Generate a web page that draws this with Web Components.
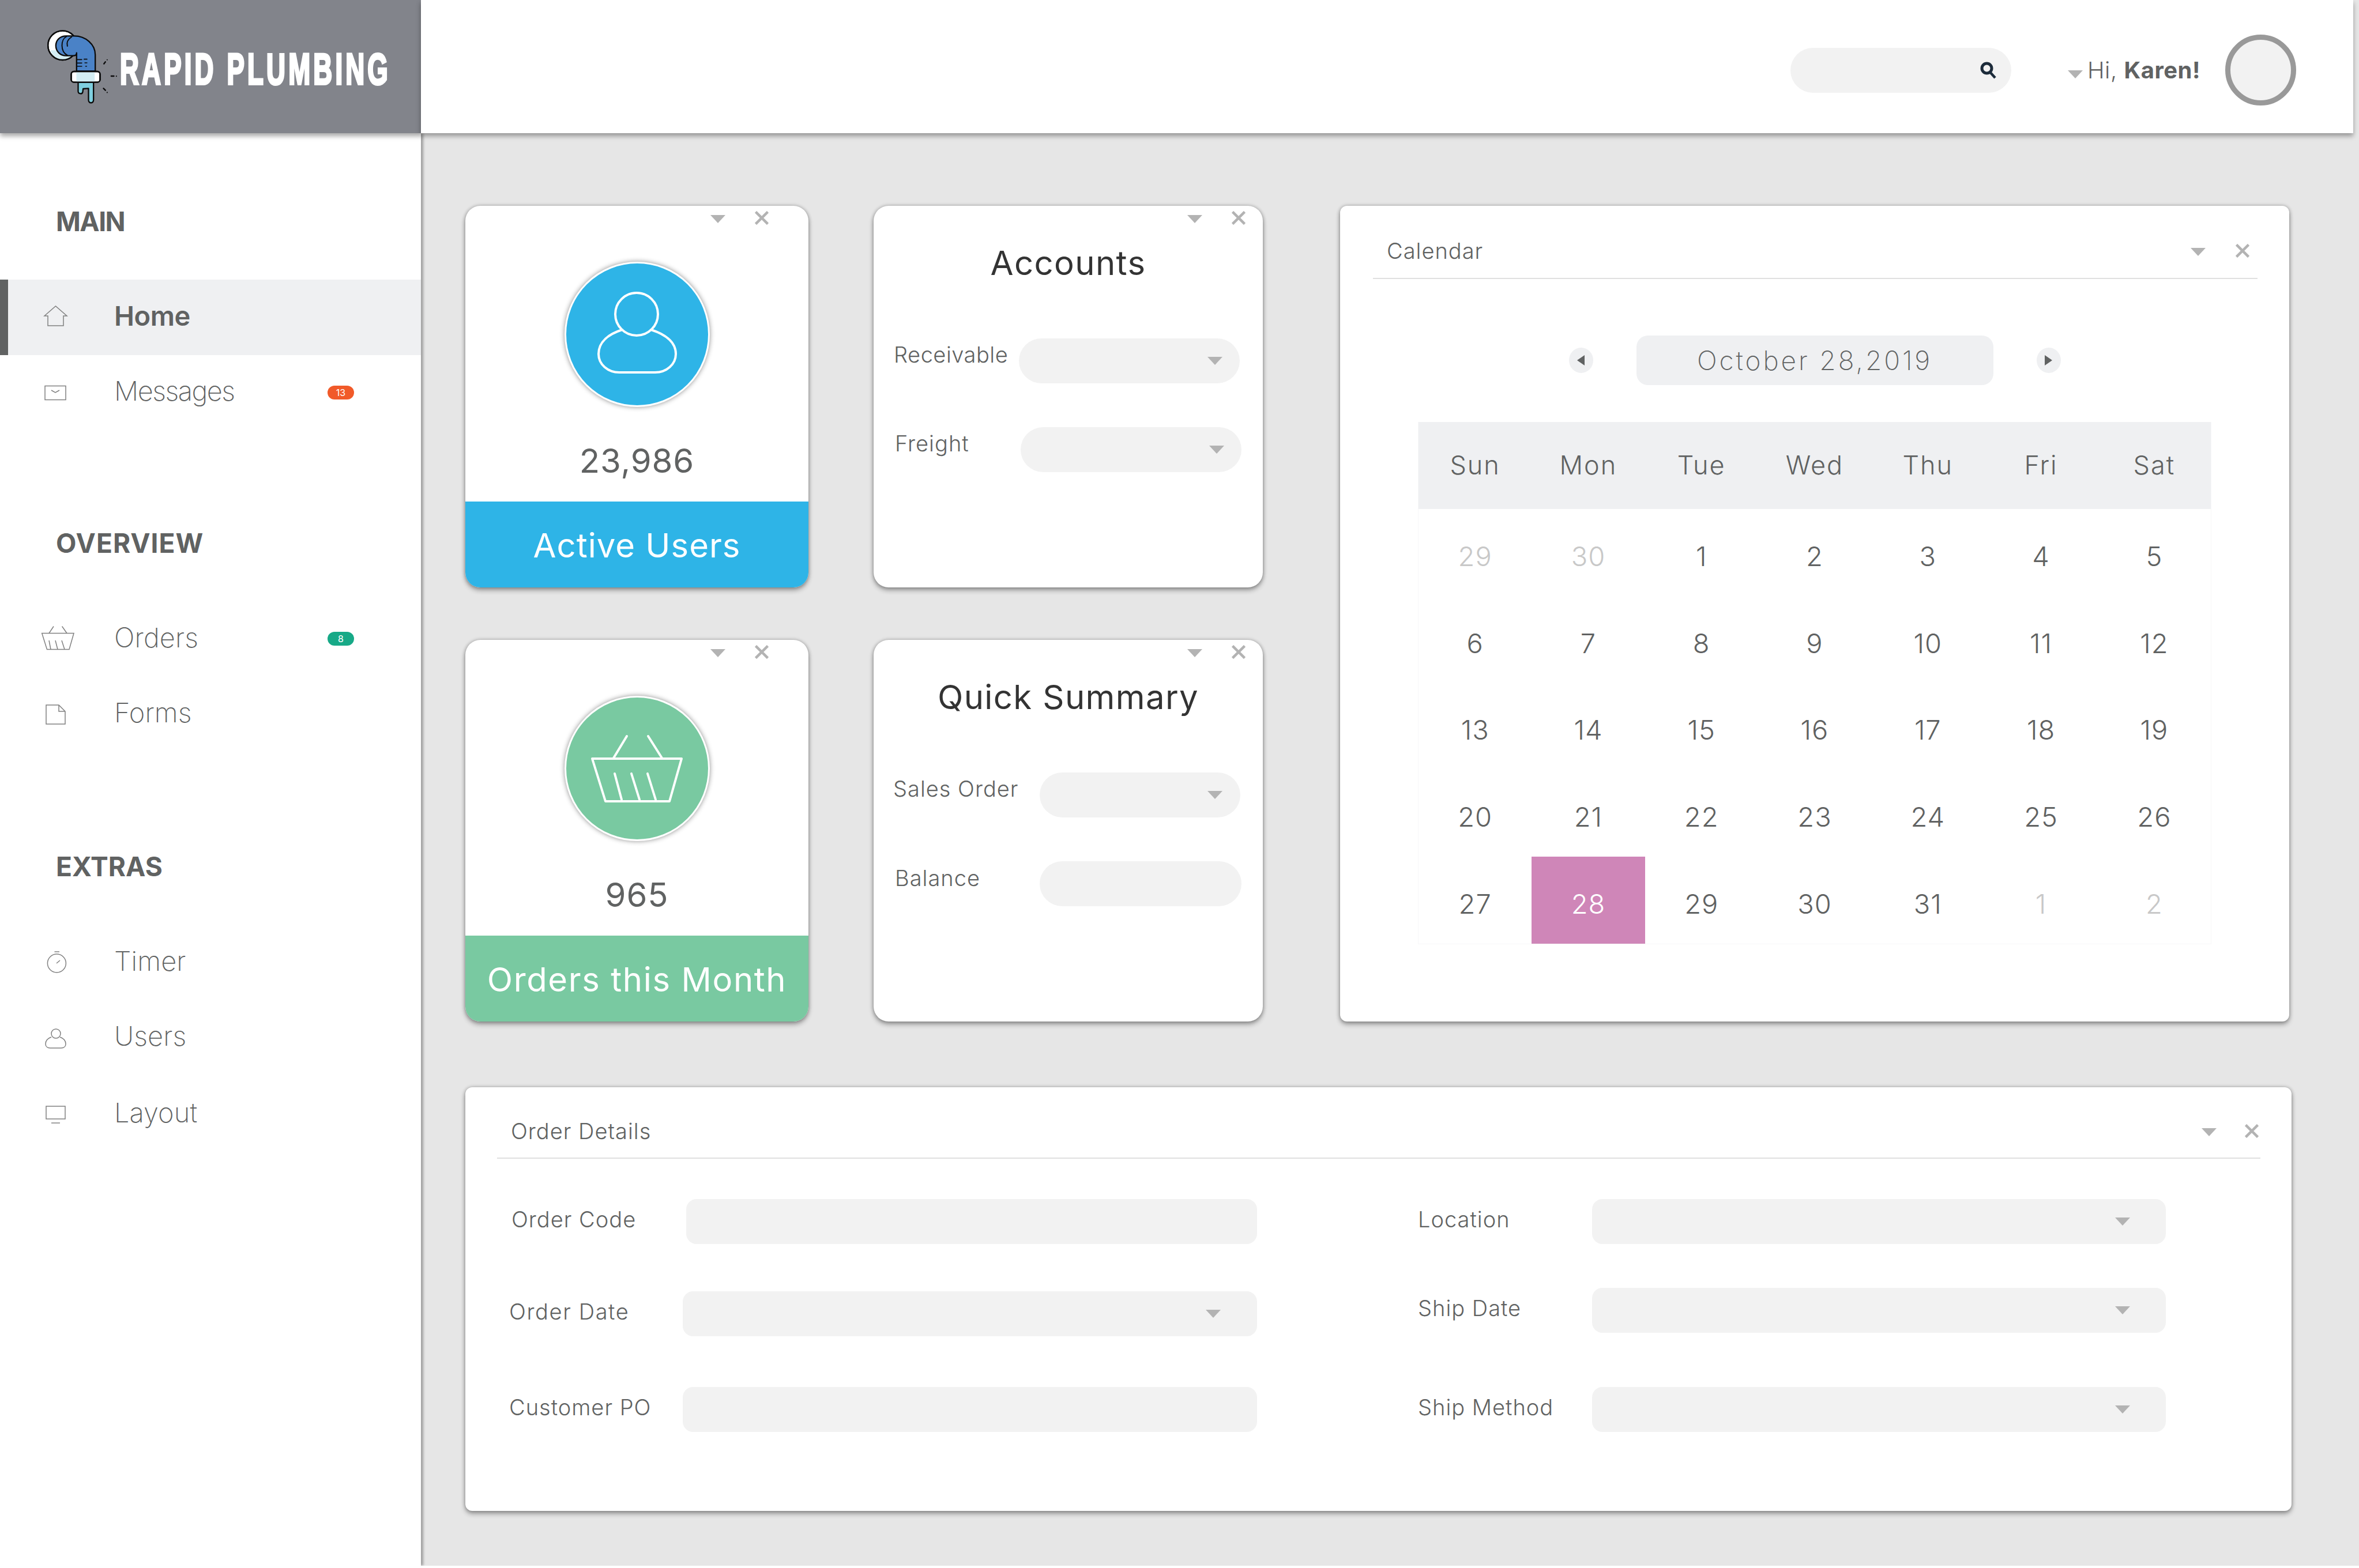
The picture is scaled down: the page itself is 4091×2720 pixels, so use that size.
<!DOCTYPE html>
<html lang="en">
<head>
<meta charset="utf-8">
<title>Rapid Plumbing</title>
<style>
  html, body { margin: 0; background: #fff; }
  body { font-family: "Inter", "Liberation Sans", sans-serif; color: #606262; }
</style>
</head>
<body>
<app-shell>
  <brand-logo slot="logo">RAPID PLUMBING</brand-logo>
  <top-bar slot="top" user="Karen!"></top-bar>

  <side-nav slot="side">
    <nav-section heading="MAIN" style="letter-spacing:-1.5px">
      <nav-item icon="home" active style="letter-spacing:-.5px">Home</nav-item>
      <nav-item icon="mail" badge="13" tone="#f15a29" style="letter-spacing:-1.5px">Messages</nav-item>
    </nav-section>
    <nav-section heading="OVERVIEW" style="letter-spacing:1px">
      <nav-item icon="basket" badge="8" tone="#17a987">Orders</nav-item>
      <nav-item icon="doc">Forms</nav-item>
    </nav-section>
    <nav-section heading="EXTRAS" style="margin-top:162px">
      <nav-item icon="timer">Timer</nav-item>
      <nav-item icon="user">Users</nav-item>
      <nav-item icon="screen" style="margin-top:2px">Layout</nav-item>
    </nav-section>
  </side-nav>

  <dash-grid>
    <stat-card value="23,986" label="Active Users" style="--tone:#2eb4e7;--label-ls:1px">
      <svg slot="icon" viewBox="0 0 252 252" fill="none" stroke="#fff" stroke-width="4" stroke-linecap="round">
        <circle cx="125" cy="91" r="37"/>
        <path d="M100 118C78 125 59 138 59 160C59 178 75 192 95 192L157 192C177 192 193 178 193 160C193 138 172 125 150 118"/>
      </svg>
    </stat-card>
    <form-card heading="Accounts">
      <ui-field label="Receivable" select style="--ls:.5px;--pad:36px;--label:216px;--input:383px;--lift:22px;--radius:39px;--chev:30px"></ui-field>
      <ui-field label="Freight" select style="--pad:38px;--label:217px;--input:383px;--lift:22px;--radius:39px;--chev:30px"></ui-field>
    </form-card>
    <panel-card heading="Calendar" class="cal" style="--inset-l:57px;--inset-r:55px;--head:127px;--head-top:31px;--ctl-r:14px;--ctl-gap:52px">
      <cal-month></cal-month>
    </panel-card>
    <stat-card value="965" label="Orders this Month" style="--tone:#79c9a1;--label-ls:1.6px">
      <svg slot="icon" viewBox="0 0 252 252" fill="none" stroke="#fff" stroke-width="4" stroke-linecap="round" stroke-linejoin="round">
        <path d="M48 109L203 109L182 183L71 183Z"/>
        <path d="M108 70L85 108M145 70L169 108M87 135L99 180M116 135L130 180M144 135L158 180"/>
      </svg>
    </stat-card>
    <form-card heading="Quick Summary">
      <ui-field label="Sales Order" select style="--pad:35px;--label:253px;--input:348px;--lift:22px;--radius:39px;--chev:31px"></ui-field>
      <ui-field label="Balance" style="--pad:38px;--label:250px;--input:350px;--lift:20px;--radius:39px"></ui-field>
    </form-card>
    <panel-card heading="Order Details" class="wide" style="--inset-l:55px;--inset-r:54px;--head:124px;--head-top:30px;--ctl-r:3px;--ctl-gap:49px">
      <order-form>
        <ui-field slot="left" label="Order Code" style="--pad:81px;--label:302px;--input:990px;--mt:70px"></ui-field>
        <ui-field slot="left" label="Order Date" select style="--ls:1.6px;--pad:77px;--label:300px;--input:996px;--mt:82px;--chev:63px"></ui-field>
        <ui-field slot="left" label="Customer PO" style="--pad:77px;--label:300px;--input:996px;--mt:88px"></ui-field>
        <ui-field slot="right" label="Location" select style="--label:301px;--input:995px;--mt:70px;--chev:62px"></ui-field>
        <ui-field slot="right" label="Ship Date" select style="--label:301px;--input:995px;--mt:76px;--chev:62px"></ui-field>
        <ui-field slot="right" label="Ship Method" select style="--label:301px;--input:995px;--mt:94px;--chev:62px"></ui-field>
      </order-form>
    </panel-card>
  </dash-grid>
</app-shell>

<script>
// each component: one <style>, one bit of markup, open shadow root
function define(name, css, html, setup) {
  customElements.define(name, class extends HTMLElement {
    constructor() {
      super();
      this.attachShadow({ mode: 'open' });
    }
    connectedCallback() {
      const markup = typeof html === 'function' ? html(this) : html;
      this.shadowRoot.innerHTML = `<style>${css}</style>${markup}`;
      if (setup) setup(this);
    }
  });
}

const ICONS = {
  home: '<path d="M13 30L32.5 13L52 30L46 30L46 47L19 47L19 30Z"/>',
  mail: '<rect x="14" y="20.5" width="36" height="24"/><path d="M25 28L32 32L39 28"/>',
  basket: '<path d="M8.7 22.5L64 22.5L56 50.5L17.5 50.5Z"/><path d="M29 10.5L21 22.5M43.6 10.5L52 22.5M21 35L24 50.5M32 35L36 50.5M43 35L48 50.5"/>',
  doc: '<path d="M16 16L38 16L49 27L49 49L16 49Z"/><path d="M38 16L38 27L49 27"/>',
  timer: '<circle cx="34.4" cy="34" r="16"/><path d="M30.5 14L39 14M34 34L40 29"/>',
  user: '<circle cx="33" cy="25" r="8"/><path d="M25 31C19 33 15 37 15 43C15 47 18 50 23 50L42 50C47 50 50 47 50 43C50 37 46 33 40 31"/>',
  screen: '<rect x="16" y="19" width="33" height="22"/><path d="M25 48L40 48"/>'
};

define('ui-chevron', `
  :host { display: block; width: 0; height: 0; flex: none;
    border-left: 13px solid transparent; border-right: 13px solid transparent;
    border-top: 14px solid #b3b3b3; }
`, '');

define('card-controls', `
  :host { display: flex; justify-content: flex-end; align-items: center;
    gap: var(--ctl-gap, 51px); padding-right: var(--ctl-r, 30px); height: 24px; }
  ui-chevron { margin-top: 3px; }
  svg { width: 24px; height: 24px; display: block; }
`, `<ui-chevron></ui-chevron>
  <svg viewBox="0 0 24 24" stroke="#b3b3b3" stroke-width="4.5"><path d="M1.5 1.5L22.5 22.5M22.5 1.5L1.5 22.5"/></svg>`);

define('app-shell', `
  :host { display: grid; grid-template-columns: 730px 1fr; grid-template-rows: 231px 1fr;
    height: 2716px; background: #e6e6e6; overflow: hidden; }
  ::slotted([slot="logo"]), ::slotted([slot="top"]) { z-index: 2; position: relative; }
`, `<slot name="logo"></slot><slot name="top"></slot><slot name="side"></slot><slot></slot>`);

define('brand-logo', `
  :host { display: flex; align-items: flex-start; background: #82848b;
    padding: 50px 0 0 80px; box-sizing: border-box; height: 231px;
    box-shadow: 0 5px 8px rgba(0,0,0,.35); }
  svg { width: 127px; height: 132px; flex: none; }
  span { display: block; margin: 26px 0 0 1px; color: #fff; white-space: nowrap;
    font: 700 76px/88px "Liberation Sans", sans-serif; -webkit-text-stroke: 4px #fff; letter-spacing: 8.6px;
    transform: scaleX(.6); transform-origin: 0 50%; }
`, `<svg viewBox="240 150 380 396" fill="none" stroke="#0b0b0b" stroke-width="7" stroke-linecap="round" stroke-linejoin="round">
    <circle cx="325" cy="236" r="76" fill="#fff"/>
    <path d="M262 262C272 296 300 310 325 312C350 312 372 300 384 286L300 262Z" fill="#d3edf3" stroke="none"/>
    <circle cx="325" cy="236" r="76"/>
    <path d="M345 187L385 187C445 187 495 230 495 285L495 370L398 370L398 275C398 285 390 290 380 290L345 290C310 290 290 265 290 238C290 210 310 187 345 187Z" fill="#4a82c7"/>
    <path d="M345 190C315 205 312 268 350 288M372 192C352 205 345 222 350 240" stroke-width="6"/>
    <path d="M400 310L425 310M437 308L452 308M400 328L425 328M441 327L452 327M400 345L425 345M445 345L450 345" stroke-width="5"/>
    <path d="M406 428L406 475C406 490 428 492 430 478L432 462L460 460L460 520C460 540 486 540 486 520L486 428Z" fill="#7fcfdf"/>
    <rect x="370" y="372" width="150" height="56" rx="14" fill="#fff"/>
    <rect x="397" y="376" width="95" height="49" fill="#d3edf3" stroke="none"/>
    <rect x="370" y="372" width="150" height="56" rx="14"/>
    <path d="M540 332L548 322M578 396L592 396M538 460L548 470" stroke-width="7"/>
    <path d="M557 311L557 311.5M605 396L605 396.5M557 481L557 481.5" stroke-width="6"/>
  </svg><span><slot></slot></span>`);

define('top-bar', `
  :host { display: flex; align-items: center; justify-content: flex-end; background: #fff;
    height: 231px; box-sizing: border-box; margin-right: 10px; padding: 13px 99px 0 0;
    box-shadow: 0 5px 8px rgba(0,0,0,.35); }
  .search { width: 383px; height: 78px; box-sizing: border-box; border-radius: 39px; background: #f2f2f2;
    display: flex; align-items: center; justify-content: flex-end; padding-right: 24px; margin-right: 98px; }
  .search svg { width: 30px; height: 30px; display: block; }
  ui-chevron { margin: 14px 8px 0 0; }
  .hi { font-size: 40px; font-weight: 300; line-height: 60px; white-space: nowrap; letter-spacing: .5px; margin-right: 43px; }
  .hi b { font-weight: 700; }
  .avatar { width: 123px; height: 123px; box-sizing: border-box; border-radius: 50%;
    background: #f2f2f2; border: 9px solid #999; margin-top: -1px; }
`, el => `<div class="search"><svg viewBox="0 0 30 30" fill="none" stroke="#1c2b3a"><circle cx="11.5" cy="11.5" r="8.5" stroke-width="5"/><path d="M17 18L26 28" stroke-width="4.5"/></svg></div>
  <ui-chevron></ui-chevron>
  <div class="hi">Hi, <b>${el.getAttribute('user')}</b></div>
  <div class="avatar"></div>`);

define('side-nav', `
  :host { display: block; background: #fff; padding-top: 116px; width: 730px;
    box-shadow: 4px 0 4px rgba(0,0,0,.3); position: relative; z-index: 1; }
`, `<slot></slot>`);

define('nav-section', `
  :host { display: block; }
  :host(:not(:first-child)) { margin-top: 159px; }
  h2 { margin: 0 0 60px; height: 78px; padding: 0 0 4px 97px; box-sizing: border-box; display: flex; align-items: center;
    font-size: 46px; font-weight: 700; color: #606262; }
  ::slotted(nav-item) { letter-spacing: .1px; }
`, el => `<h2>${el.getAttribute('heading')}</h2><slot></slot>`);

define('nav-item', `
  :host { display: flex; align-items: center; height: 130.5px; }
  :host([active]) { background: #eff0f2; box-shadow: inset 14px 0 0 #606262; }
  svg { width: 64px; height: 64px; margin-left: 64px; flex: none; overflow: visible; }
  .label { flex: 1; margin-left: 70px; padding-bottom: 6px; font-size: 47px; font-weight: 200; color: #606262; }
  :host([active]) .label { font-weight: 600; }
  .badge { width: 46px; height: 24px; border-radius: 12px; margin-right: 116px; color: #fff; letter-spacing: 0;
    font-size: 16px; font-weight: 400; display: flex; align-items: center; justify-content: center; }
`, el => {
  const badge = el.getAttribute('badge');
  return `<svg viewBox="0 0 64 64" fill="none" stroke="#808080" stroke-width="1.5">${ICONS[el.getAttribute('icon')]}</svg>
    <div class="label"><slot></slot></div>
    ${badge ? `<div class="badge" style="background:${el.getAttribute('tone')}">${badge}</div>` : ''}`;
});

define('dash-grid', `
  :host { display: grid; padding: 126px 0 0 77px; align-content: start;
    grid-template-columns: 595px 675px 1671px; column-gap: 113px;
    grid-template-rows: 662px 662px 758px; row-gap: 91px; }
  ::slotted(panel-card.cal) { grid-column: 3; grid-row: 1 / span 2; margin: 0 4px 0 21px; }
  ::slotted(panel-card.wide) { grid-column: 1 / span 3; margin-top: 23px; }
`, `<slot></slot>`);

const cardSkin = `background: #fff; box-shadow: 0 5px 9px rgba(0,0,0,.33), 0 0 6px rgba(0,0,0,.28);`;

define('stat-card', `
  :host { display: flex; flex-direction: column; box-sizing: border-box;
    border-radius: 26px; overflow: hidden; ${cardSkin} }
  .ctl { padding-top: 9px; --ctl-r: 69px; }
  .ring { width: 252px; height: 252px; box-sizing: border-box; margin: 64px auto 0; border-radius: 50%;
    background: var(--tone); border: 3px solid #fff; box-shadow: 0 0 8px rgba(0,0,0,.45); }
  ::slotted(svg) { display: block; width: 252px; height: 252px; margin: -3px; }
  .value { margin-top: 53px; text-align: center; font-size: 58px; line-height: 80px; font-weight: 400; color: #606262; letter-spacing: .9px; }
  .band { margin-top: auto; height: 149px; box-sizing: border-box; padding-top: 2px; background: var(--tone); color: #fff; display: flex;
    align-items: center; justify-content: center; font-size: 58px; font-weight: 400; letter-spacing: var(--label-ls, 0); }
`, el => `<div class="ctl"><card-controls></card-controls></div>
  <div class="ring"><slot name="icon"></slot></div>
  <div class="value">${el.getAttribute('value')}</div>
  <div class="band">${el.getAttribute('label')}</div>`);

define('form-card', `
  :host { display: block; box-sizing: border-box; border-radius: 26px; ${cardSkin} }
  .ctl { padding-top: 9px; }
  h3 { margin: 36px 0 101px; text-align: center; font-size: 58px; line-height: 60px; font-weight: 400; color: #333; letter-spacing: 1.4px; }
  .fields { display: flex; flex-direction: column; gap: 76px; }
`, el => `<div class="ctl"><card-controls></card-controls></div>
  <h3>${el.getAttribute('heading')}</h3>
  <div class="fields"><slot></slot></div>`);

define('ui-field', `
  :host { display: flex; align-items: center; margin-top: var(--mt, 0); padding-left: var(--pad, 0); }
  .label { width: var(--label); flex: none; padding-bottom: var(--lift, 8px); font-size: 38px; font-weight: 300;
    color: #606262; white-space: nowrap; box-sizing: border-box; letter-spacing: var(--ls, 1px); margin-left: -1px; margin-right: 1px; }
  .box { width: var(--input); height: 78px; flex: none; box-sizing: border-box; background: #f2f2f2;
    border-radius: var(--radius, 18px); display: flex; align-items: center; justify-content: flex-end;
    padding-right: var(--chev, 30px); }
`, el => `<div class="label">${el.getAttribute('label')}</div>
  <div class="box">${el.hasAttribute('select') ? '<ui-chevron></ui-chevron>' : ''}</div>`);

define('panel-card', `
  :host { display: block; box-sizing: border-box; border-radius: 12px; ${cardSkin} }
  header { display: flex; align-items: center; justify-content: space-between; height: var(--head);
    box-sizing: border-box; padding: var(--head-top) 0 0 24px; margin: 0 var(--inset-r) 0 var(--inset-l);
    border-bottom: 2px solid #e0e0e0; }
  h3 { margin: 0; font-size: 38px; font-weight: 300; color: #606262; letter-spacing: 1px; }
`, el => `<header><h3>${el.getAttribute('heading')}</h3><card-controls></card-controls></header><slot></slot>`);

define('order-form', `
  :host { display: grid; grid-template-columns: 1653px 1fr; }
`, `<div><slot name="left"></slot></div><div><slot name="right"></slot></div>`);

const WEEK = ['Sun', 'Mon', 'Tue', 'Wed', 'Thu', 'Fri', 'Sat'];
const DAYS = [29, 30].concat(Array.from({ length: 31 }, (_, i) => i + 1), [1, 2]);

define('cal-month', `
  :host { display: block; }
  nav { display: flex; justify-content: center; align-items: center; gap: 75px; margin-top: 98px; }
  .arrow { width: 42px; height: 44px; border-radius: 50%; background: #eff0f2; display: flex;
    align-items: center; justify-content: center; }
  .arrow i { width: 0; height: 0; border-top: 9px solid transparent; border-bottom: 9px solid transparent; }
  .prev i { border-right: 13px solid #606262; }
  .next i { border-left: 13px solid #606262; }
  .date { width: 619px; height: 86px; border-radius: 20px; background: #eff0f2; display: flex; align-items: center;
    justify-content: center; font-size: 46px; font-weight: 200; letter-spacing: 3.9px; color: #606262; }
  .table { display: grid; grid-template-columns: repeat(7, 1fr); width: 1376px; margin: 64px auto 0; box-sizing: border-box;
    border: solid #f7f7f8; border-width: 0 1px 1px; }
  .table div { display: flex; align-items: center; justify-content: center; height: 150.8px; box-sizing: border-box;
    font-size: 47px; font-weight: 300; color: #606262; padding-top: 12px; letter-spacing: 1px; }
  .table .wk { height: 151px; background: #eff0f2; font-size: 45px; padding-top: 0; padding-bottom: 3px; letter-spacing: 2px; }
  .table .off { color: #c8c8c8; }
  .table .today { background: #cf86b8; color: #fff; }
`, () => `<nav><div class="arrow prev"><i></i></div><div class="date">October 28,2019</div><div class="arrow next"><i></i></div></nav>
  <div class="table">
    ${WEEK.map(d => `<div class="wk">${d}</div>`).join('')}
    ${DAYS.map((d, i) => {
      const off = i < 2 || i > 32;
      return `<div class="${off ? 'off' : ''} ${!off && d === 28 ? 'today' : ''}">${d}</div>`;
    }).join('')}
  </div>`);
</script>
</body>
</html>
